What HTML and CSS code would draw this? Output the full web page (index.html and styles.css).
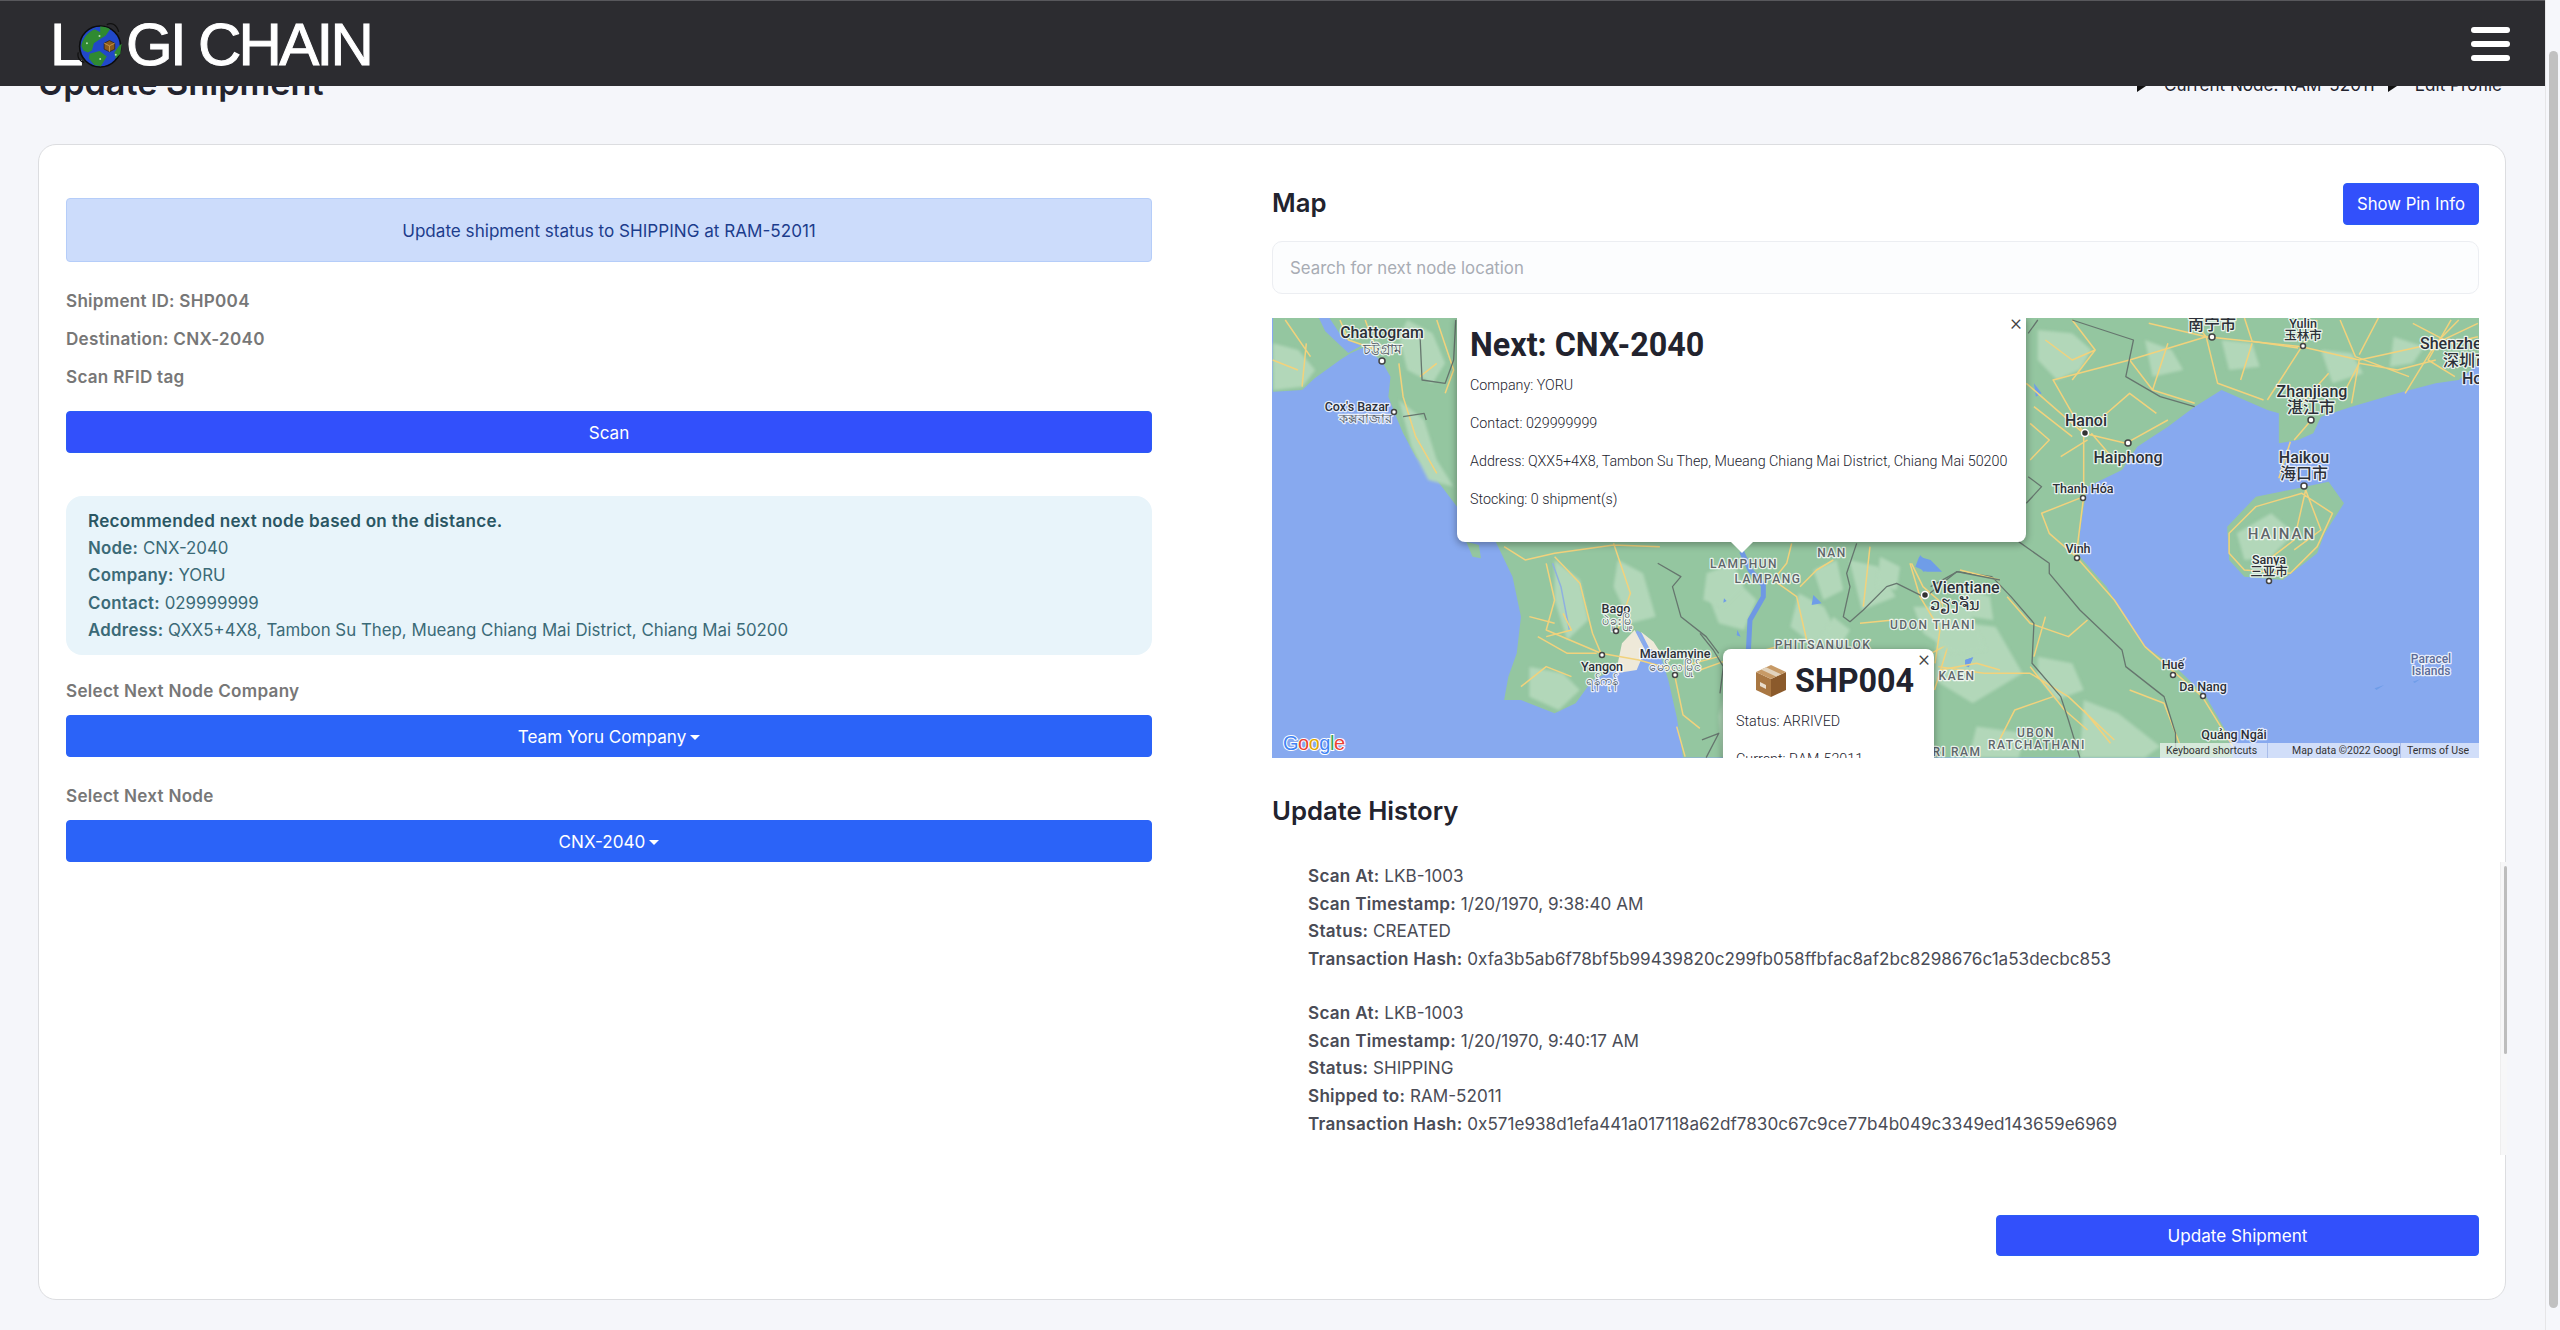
FILE: index.html
```html
<!DOCTYPE html>
<html lang="en">
<head>
<meta charset="utf-8">
<title>Update Shipment</title>
<link rel="stylesheet" href="styles.css">
</head>
<body>
<div class="app">
  <div class="page">
    <header class="topbar">
      <div class="logo">
        <span class="logo-l">L</span>
        <svg class="globe" viewBox="80 10 145 145" aria-hidden="true">
          <path class="orbit" d="M170 24c15-8 30 0 36 22M84 108c-4 15 4 26 18 30"/>
          <circle class="ocean" cx="150" cy="90" r="62"/>
          <path class="cont" d="M93 88c4-22 20-42 40-50l16 8 16 12-16 10-18 12-6 22-12 6-14-6z"/>
          <path class="cont" d="M150 30c12 0 22 3 30 8l-14 20-16-8z"/>
          <path class="cont" d="M118 112l30-8 22 16-18 30-20-4-16-20zM207 88l8-6-4 30-14 14-4-18z"/>
          <circle class="spark" cx="148" cy="58" r="3"/><circle class="spark" cx="110" cy="80" r="3"/><circle class="spark" cx="150" cy="128" r="3"/><circle class="spark" cx="197" cy="115" r="3"/>
          <path class="parcel" d="M162 80l16-8 16 8v18l-16 8-16-8z"/>
          <path class="parcel-line" d="M162 80l16 8 16-8M178 88v18"/>
        </svg>
        <span class="logo-rest">GI CHAIN</span>
      </div>
      <div class="burger"><span></span><span></span><span></span></div>
    </header>

    <main class="content">
      <div class="title-row">
        <h1 class="page-title">Update Shipment</h1>
        <nav class="crumbs">
          <svg class="crumb-arrow" viewBox="0 0 14 18"><path d="M1 1l12 8-12 8z"/></svg>
          <span>Current Node: RAM-52011</span>
          <svg class="crumb-arrow" viewBox="0 0 14 18"><path d="M1 1l12 8-12 8z"/></svg>
          <span>Edit Profile</span>
        </nav>
      </div>

      <section class="card">
        <div class="col-left">
          <div class="alert">Update shipment status to SHIPPING at RAM-52011</div>
          <p class="label first">Shipment ID: SHP004</p>
          <p class="label">Destination: CNX-2040</p>
          <p class="label">Scan RFID tag</p>
          <button class="btn btn-indigo btn-full scan">Scan</button>
          <div class="reco">
            <div class="reco-title">Recommended next node based on the distance.</div>
            <div><b>Node:</b> CNX-2040</div>
            <div><b>Company:</b> YORU</div>
            <div><b>Contact:</b> 029999999</div>
            <div><b>Address:</b> QXX5+4X8, Tambon Su Thep, Mueang Chiang Mai District, Chiang Mai 50200</div>
          </div>
          <p class="label select-label">Select Next Node Company</p>
          <button class="btn btn-blue btn-full caret">Team Yoru Company</button>
          <p class="label select-label second">Select Next Node</p>
          <button class="btn btn-blue btn-full caret">CNX-2040</button>
        </div>

        <div class="col-right">
          <div class="map-head">
            <h2 class="section-title map-title">Map</h2>
            <button class="btn btn-indigo pin-btn">Show Pin Info</button>
          </div>
          <input class="search" type="text" placeholder="Search for next node location">

          <div class="map">
            <svg class="map-svg" viewBox="1272 318 1207 440" width="1207" height="440">
              <rect class="water" x="1272" y="318" width="1207" height="440"/>
              <g transform="translate(1260 300) scale(.4209 .3333)">
                <path class="land" d="M31 54L1568 54 1568 1373 1005 1373 990 1250 970 1140 950 1060 920 1010 895 990 880 1060 860 1100 790 1140 750 1210 700 1240 620 1200 580 1200 590 1130 610 1060 620 950 600 830 560 725 480 640 420 540 370 470 340 400 320 340 305 290 310 230 290 185 250 140 215 160 190 180 130 235 100 270 31 275z"/>
                <path class="land" d="M490 725l30 10 5 40-20-5z"/>
                <path class="water" d="M140 54l15 40 55 65 30-22-45-25-30-58z"/>
                <path class="light" d="M31 130l60 20 40 60-30 50-69 10zM350 60l60 40 30 90-30 60-60-40-20-100zM330 300l60 60 30 120 40 80-60-20-40-100zM700 780l60 60 20 120-50 60-30-120zM850 780l60 40 30 130-60 20-40-110zM640 1100l80 20 40 50-50 60-70-40zM1060 870l70-30 50 60-30 90-60-20zM1280 880l60 40 40 100-60 20-60-60zM1400 780l70 20 40 90-80 40zM1120 1100l30 40 10 230-60 0-10-120z"/>
                <path class="sand" d="M860 1030l30-40 25 60-20 60-50 10zM905 995l30 30 20 40-30-20z"/>
                <path class="river2" d="M695 790l20 70 20 130M900 1000l10 30"/>
                <g class="road">
                  <path d="M60 60l60 110M110 130l-10 130M330 190l10 100 30 120 50 110M30 180l60 30M190 60l20 60 70 30M250 60l20 70M420 190l-40 40"/>
                  <path d="M420 60l40 150-20 70"/>
                  <path d="M580 740l50 40 70-20 140-25 110 5M680 790l20 110-20 90 130 70M700 770l60 80 30 150 20 60M840 730l40 150-30 110M810 1060l90 20 85 30M985 1125l20 120 40 40"/>
                  <path d="M660 1010l70 50 70 0M640 950l60 20M990 1280l20 90M720 940l20 50-60 20M1090 1070l-90 30M620 1160l60-60 60 30"/>
                </g>
                <g class="border">
                  <path d="M380 100l5 140 55 10 20-70 5-120M340 350l50-10 5 20M945 790l55 40-20 30 20 90 60 60 30 50M1050 1320l40-20-30 73"/>
                </g>
              </g>
              <g transform="translate(1900 300) scale(.3827 .3333)">
                <path class="land" d="M870 1373L850 1290 800 1190 720 1100 640 1040 570 920 540 860 470 770 470 700 480 620 490 560 580 510 620 440 700 380 770 320 840 270 900 300 960 330 990 340 990 430 1040 420 1080 400 1100 350 1180 320 1300 280 1400 250 1460 240 1513 190 1513 54 0 54 0 1373z"/>
                <path class="land" d="M855 680L930 590 1040 565 1120 545 1160 610 1110 700 1090 760 1000 840 900 830 860 780z"/>
                <path class="light" d="M360 90l90 10 50 50-30 60-60 30-50-60zM640 120l70 30 30 60-80 20zM840 120l80 10 20 70-80 10zM1100 150l80 10 30 60-80 30zM1290 110l80 30-30 50-60 10zM360 1070l90 20 30 80-70 30-50-70zM100 960l150 20 70 140-130 90-100-70zM480 1200l90 40 110 100-40 33-170 0zM880 700l90-60 60 60-60 70-70 10zM200 1280l130 20-20 73-130 0z"/>
                <path class="lake" d="M50 770l30 10 30 35-40 0-30-15zM170 1080l20-8-10 30-10-5zM350 250l20 30-15 10zM1240 1165l25-10-20 15zM1340 1145l20-8-15 12z"/>
                <g class="road">
                  <path d="M600 180l200-70 250 30 150 40 200-50 110-60M800 110l30 140 120 50M1050 140l-90 160M1200 180l-20 130M1400 130l-80 150M1050 140l40-80M1400 130l60-70"/>
                  <path d="M650 70l150 40-40-56M900 54l20 70 120 20M1150 60l40 110 140 60M1250 54l-50 110M1340 70l100 60 70-20M1440 60l-60 120 70 50M1400 180l-100 30-100-20-50 110M920 130l-30 110M700 130l-40 140 110 40M600 180l60 90M450 60l60 90-60 90M380 120l70 60 60-30M1120 220l-70 90"/>
                  <path d="M330 250l150 150 110 30 110-70M480 400l0 190-20 180 100 130 80 140 150 150 80 150M480 400l-80-160 200-60M480 400l-120-120M350 320l100 90M480 590l-110 50 20 60 70 70M520 360l80-80 70 60M420 470l70-50M560 480l-60-80M340 370l50 50-50 60"/>
                  <path d="M1075 360l-45 60M1020 425l-30 110"/>
                  <path d="M860 700l70-80 120-40 80 60-40 100-70 80-120-10-40-50zM1060 570l-30 150-80 70M1060 570l40 120-70 60"/>
                  <path d="M30 790l30 70 50 50 20 110-40 150M130 1030l-80 50M100 1100l120 20 120 0 100 70 120 130M340 1100l90 130 60 60M480 1230l70 100"/>
                  <path d="M600 1170l90 40 40 120M400 1190l-100 40-40 90M280 890l60 80 100 40 50-50M380 950l-30 120"/>
                </g>
                <g class="border">
                  <path d="M450 60l160 60-20 110 90 60 90 30M335 100l25-40M335 530l35 30-40 50M310 725l80 65 0 30 80 110 110 120 10 50 100 90 30 110 0 63"/>
                  <path d="M80 860l70-45 90 15 50 60 60 80-5 120 75 100 20 70 30 113"/>
                </g>
              </g>
              <g transform="translate(1700 530) scale(.3333)">
                <path class="light" d="M20 130l80-30 30 70-60 60-60-20zM340 120l70-30 20 90-60 30zM540 80l60 30-10 70-60-10zM640 230l160 0 60 130-100 10-90-60zM780 170l90 30 10 70-70-10zM400 260l50 40-30 50-60-20z"/>
                <path class="lake" d="M660 75l30 30 25 10-45 10-15-20zM340 195l25 25-30 5zM795 390l25-8-10 22zM72 205l8 8-10 5zM112 300l10 20-12-4z"/>
                <path class="river" d="M125 65l25 55 40 45 0 35-40 70-5 95"/>
                <g class="road">
                  <path d="M275 40l-15 60-40 50 70 50 30 130M400 90l-50 30-50 50M510 50l-20 180M630 100l30 100 60 100-15 100M720 420l110-20 70 20M0 420l70-25 160-45M480 280l100-10M780 120l120 30"/>
                </g>
                <g class="border">
                  <path d="M470 40l-30 90 10 40-20 90 20 15 40-35 70-70 30-10 80 40M690 190l80-65 130 25M0 310l40 50 30 50-10 80"/>
                </g>
              </g>

              <g class="city">
                <text x="1382" y="332" class="wide">Chattogram</text>
                <text x="1357" y="406" class="sm">Cox's Bazar</text>
                <text x="1382" y="348" class="bn">চট্টগ্রাম</text>
                <text x="1365" y="418" class="bn sm">কক্সবাজার</text>
                <text x="1616" y="608" class="sm">Bago</text>
                <text x="1618" y="620" class="bn sm">ပဲခူးမြို့</text>
                <text x="1602" y="666" class="sm">Yangon</text>
                <text x="1602" y="680" class="bn sm">ရန်ကုန်</text>
                <text x="1675" y="653" class="sm">Mawlamyine</text>
                <text x="1675" y="666" class="bn sm">မော်လမြိုင်</text>
                <text x="1966" y="587" class="lg">Vientiane</text>
                <text x="1955" y="604" class="lg">ວຽງຈັນ</text>
                <text x="2086" y="420" class="lg">Hanoi</text>
                <text x="2128" y="457" class="lg">Haiphong</text>
                <text x="2083" y="488" class="sm">Thanh Hóa</text>
                <text x="2078" y="548" class="sm">Vinh</text>
                <text x="2212" y="324" class="lg">南宁市</text>
                <text x="2303" y="323" class="sm">Yulin</text>
                <text x="2303" y="335" class="sm">玉林市</text>
                <text x="2312" y="391" class="lg">Zhanjiang</text>
                <text x="2311" y="407" class="lg">湛江市</text>
                <text x="2304" y="457" class="lg">Haikou</text>
                <text x="2304" y="473" class="lg">海口市</text>
                <text x="2269" y="559" class="sm">Sanya</text>
                <text x="2269" y="571" class="sm">三亚市</text>
                <text x="2173" y="664" class="sm">Huế</text>
                <text x="2203" y="686" class="sm">Da Nang</text>
                <text x="2234" y="734" class="sm">Quảng Ngãi</text>
                <text x="2420" y="343" class="lg start">Shenzhen</text>
                <text x="2443" y="360" class="lg start">深圳市</text>
                <text x="2462" y="378" class="lg start">Hong Kong</text>
              </g>
              <g class="region">
                <text x="1744" y="564">LAMPHUN</text>
                <text x="1768" y="579">LAMPANG</text>
                <text x="1832" y="553">NAN</text>
                <text x="1823" y="645">PHITSANULOK</text>
                <text x="1933" y="625">UDON THANI</text>
                <text x="1957" y="676">KAEN</text>
                <text x="1957" y="752">RI RAM</text>
                <text x="2036" y="733">UBON</text>
                <text x="2037" y="745">RATCHATHANI</text>
                <text x="2282" y="534" class="big">HAINAN</text>
              </g>
              <g class="islands">
                <text x="2431" y="659">Paracel</text>
                <text x="2431" y="671">Islands</text>
              </g>
              <g class="dots">
                <circle cx="1382" cy="361" r="3"/><circle cx="1394" cy="412" r="2.5"/><circle cx="1616" cy="631" r="2.5"/><circle cx="1602" cy="655" r="2.5"/><circle cx="1675" cy="675" r="2.5"/>
                <circle cx="2128" cy="443" r="3"/><circle cx="2083" cy="498" r="2.5"/><circle cx="2077" cy="558" r="2.5"/><circle cx="2212" cy="337" r="3"/><circle cx="2303" cy="346" r="2.5"/><circle cx="2311" cy="420" r="3"/><circle cx="2304" cy="486" r="3"/><circle cx="2269" cy="581" r="2.5"/><circle cx="2173" cy="675" r="2.5"/><circle cx="2203" cy="696" r="2.5"/>
              </g>
              <g class="capitals">
                <circle cx="2085" cy="433" r="3.5"/><circle cx="1925" cy="595" r="3.5"/>
              </g>
              <g class="google">
                <text x="1283" y="750"><tspan class="gb">G</tspan><tspan class="gr">o</tspan><tspan class="gy">o</tspan><tspan class="gb">g</tspan><tspan class="gg">l</tspan><tspan class="gr">e</tspan></text>
              </g>
            </svg>

            <div class="map-terms">
              <span class="terms-a">Keyboard shortcuts</span>
              <span class="terms-b">Map data ©2022 Google</span>
              <span class="terms-c">Terms of Use</span>
            </div>

            <div class="popup popup-next">
              <button class="popup-x">×</button>
              <h3 class="popup-title">Next: CNX-2040</h3>
              <p>Company: YORU</p>
              <p>Contact: 029999999</p>
              <p>Address: QXX5+4X8, Tambon Su Thep, Mueang Chiang Mai District, Chiang Mai 50200</p>
              <p>Stocking: 0 shipment(s)</p>
            </div>
            <div class="popup-tail"></div>
            <div class="popup popup-ship">
              <button class="popup-x">×</button>
              <h3 class="popup-title ship-title">
                <svg class="box-icon" viewBox="0 0 32 34" aria-hidden="true">
                  <path class="box-left" d="M1 8l15 7v18L1 26z"/>
                  <path class="box-right" d="M16 15l15-7v18l-15 7z"/>
                  <path class="box-top" d="M1 8l15-7 15 7-15 7z"/>
                  <path class="box-tape" d="M6 5.600l15 7 5-2.400-15-7z"/>
                  <path class="box-label" d="M5 18l6 3v4l-6-3z"/>
                </svg>
                SHP004
              </h3>
              <p>Status: ARRIVED</p>
              <p>Current: RAM-52011</p>
            </div>
          </div>

          <h2 class="section-title history-title">Update History</h2>
          <div class="history">
            <div class="entry">
              <div><b>Scan At:</b> LKB-1003</div>
              <div><b>Scan Timestamp:</b> 1/20/1970, 9:38:40 AM</div>
              <div><b>Status:</b> CREATED</div>
              <div><b>Transaction Hash:</b> 0xfa3b5ab6f78bf5b99439820c299fb058ffbfac8af2bc8298676c1a53decbc853</div>
            </div>
            <div class="entry">
              <div><b>Scan At:</b> LKB-1003</div>
              <div><b>Scan Timestamp:</b> 1/20/1970, 9:40:17 AM</div>
              <div><b>Status:</b> SHIPPING</div>
              <div><b>Shipped to:</b> RAM-52011</div>
              <div><b>Transaction Hash:</b> 0x571e938d1efa441a017118a62df7830c67c9ce77b4b049c3349ed143659e6969</div>
            </div>
            <div class="history-track"><div class="history-thumb"></div></div>
          </div>
          <div class="actions">
            <button class="btn btn-indigo update-btn">Update Shipment</button>
          </div>
        </div>
      </section>
    </main>
  </div>
  <div class="scrollbar"><div class="scrollbar-thumb"></div></div>
</div>
</body>
</html>
```

FILE: styles.css
```css
* { box-sizing: border-box; }
html, body { margin: 0; height: 100%; overflow: hidden; }
body { font-family: Inter, "Noto Sans", sans-serif; font-size: 17.100px; color: #22232e; background: #f5f6fa; }
.app { display: flex; height: 1330px; }
.page { flex: 1; position: relative; overflow: hidden; min-width: 0; }

.topbar { position: absolute; top: 0; left: 0; right: 0; z-index: 10; height: 86px; background: #2c2c30; border-top: 1px solid #58585c; display: flex; align-items: center; justify-content: space-between; padding: 0 35px 0 50px; }
.logo { display: flex; align-items: center; color: #fff; font-family: "Liberation Sans", Arial, sans-serif; font-size: 60px; line-height: 1; letter-spacing: -2.700px; -webkit-text-stroke: 1px #fff; margin-top: 2px; }
.logo-l { width: 27px; }
.globe { width: 48px; height: 48px; margin-top: -1px; }
.orbit { fill: none; stroke: #111; stroke-width: 4; }
.ocean { fill: #2148c9; stroke: #0c0c0c; stroke-width: 5; }
.cont { fill: #2f8a31; }
.spark { fill: #b6e0b0; }
.parcel { fill: #8a5a1c; stroke: #2a1c08; stroke-width: 2; }
.parcel-line { fill: none; stroke: #e0b060; stroke-width: 2; }
.logo-rest { white-space: pre; margin-left: 1px; }
.burger { display: flex; flex-direction: column; gap: 8px; width: 39px; }
.burger span { height: 6px; border-radius: 3px; background: #fff; }

.content { padding: 63px 39px 0 38px; }
.title-row { display: flex; justify-content: space-between; height: 40px; margin-bottom: 41px; }
.page-title { margin: 0; font-size: 34.200px; line-height: 40px; font-weight: 600; color: #22232e; }
.crumbs { display: flex; align-items: center; height: 24px; margin-top: 9px; margin-right: 4px; color: #22232e; }
.crumb-arrow { width: 14px; height: 18px; margin: 0 14px 0 0; fill: #111; }
.crumbs span + .crumb-arrow { margin-left: 12px; }

.card { display: grid; grid-template-columns: 1086px 1207px; column-gap: 120px; height: 1156px; background: #fff; border: 1px solid #dcdde0; border-radius: 18px; padding: 38px 27px 0; }
.col-left { padding-top: 15px; }
.alert { height: 64px; display: flex; align-items: center; justify-content: center; background: #ccdcfb; border: 1px solid #b5cdf9; border-radius: 4px; color: #1c3c8c; }
.label { margin: 11px 0 0; line-height: 27px; font-weight: 600; letter-spacing: .27px; color: #777; }
.label.first { margin-top: 25px; }
.btn { font: inherit; color: #fff; border: 1px solid; border-radius: 4px; cursor: pointer; }
.btn-indigo { background: #3250fb; border-color: #2a5cf5; }
.btn-blue { background: #2b63f8; border-color: #2b63f8; }
.btn-full { display: block; width: 100%; height: 42px; }
.scan { margin-top: 21px; }
.caret::after { content: ""; display: inline-block; margin-left: 4px; vertical-align: 3px; border-top: 5px solid #fff; border-left: 5px solid transparent; border-right: 5px solid transparent; }
.reco { margin-top: 43px; height: 159px; padding: 11px 22px; background: #e8f4fa; border-radius: 16px; color: #3b6a77; font-size: 16.850px; line-height: 27.500px; }
.reco b { font-weight: 600; letter-spacing: .27px; }
.reco-title { font-weight: 600; font-size: 17.100px; letter-spacing: .27px; color: #2a5663; }
.select-label { margin-top: 22px; }
.select-label.second { margin-top: 25px; }
.select-label + .btn { margin-top: 11px; }

.map-head { display: flex; justify-content: space-between; align-items: center; height: 42px; }
.section-title { margin: 0; font-size: 25.700px; line-height: 32px; font-weight: 600; color: #22232e; }
.map-title { margin-bottom: 2px; }
.pin-btn { height: 42px; width: 136px; padding: 0; font-size: 16.700px; }
.search { display: block; width: 100%; height: 53px; margin-top: 16px; padding: 0 17px; font: inherit; font-size: 16.800px; background: #fcfdfe; border: 1px solid #eceef2; border-radius: 10px; color: #22232e; }
.search::placeholder { color: #a8acb4; opacity: 1; }

.map { position: relative; height: 440px; margin-top: 24px; overflow: hidden; font-family: Roboto, sans-serif; }
.map-svg { display: block; font-family: Roboto, "Noto Sans CJK SC", sans-serif; }
.water { fill: #87a9ef; }
.land { fill: #94c6a0; }
.light { fill: #b2d7b9; filter: blur(4px); }
.sand { fill: #eee9d9; filter: blur(1px); }
.lake { fill: #6f9de8; }
.road path, .border path, .river, .river2 { fill: none; vector-effect: non-scaling-stroke; stroke-linejoin: round; }
.road path { stroke: #f2d27c; stroke-width: 1.500; }
.border path { stroke: #66766e; stroke-width: 1.300; }
.river { stroke: #6f98e4; stroke-width: 5; }
.river2 { stroke: #8fb0e0; stroke-width: 1.500; }
.city text, .region text, .islands text { text-anchor: middle; dominant-baseline: central; paint-order: stroke; stroke: rgba(255,255,255,.8); stroke-width: 2.500px; stroke-linejoin: round; }
.city text { font-size: 14px; font-weight: 500; fill: #2c3038; }
.city text.wide { font-size: 15.800px; }
.city text.lg { font-size: 16px; }
.city text.sm { font-size: 12.500px; }
.city text.bn { font-family: "Noto Sans", "DejaVu Sans", sans-serif; font-weight: 400; fill: #4d5560; }
.city text.start { text-anchor: start; }
.region text { font-size: 12px; font-weight: 500; letter-spacing: 1.500px; fill: #5f666a; }
.region text.big { font-size: 15px; letter-spacing: 2px; }
.islands text { font-size: 12px; font-weight: 500; fill: #5c6c98; }
.dots circle { fill: #fff; stroke: #444; stroke-width: 1.500; }
.capitals circle { fill: #333; stroke: #fff; stroke-width: 1.500; }
.google text { font-family: "Liberation Sans", sans-serif; font-size: 20px; font-weight: 400; paint-order: stroke; stroke: #fff; stroke-width: 2px; letter-spacing: -.5px; }
.gb { fill: #4285f4; } .gr { fill: #ea4335; } .gy { fill: #e0a800; } .gg { fill: #34a853; }

.map-terms { position: absolute; right: 0; bottom: 0; left: 888px; height: 15px; display: flex; background: rgba(255,255,255,.62); font-size: 10.500px; line-height: 15px; color: #333; white-space: nowrap; }
.map-terms span { overflow: hidden; display: block; }
.terms-a { width: 108px; padding-left: 6px; border-right: 1px solid #a9bdea; }
.terms-b { width: 133px; padding-left: 24px; border-right: 1px solid #a9bdea; }
.terms-c { padding-left: 6px; }

.popup { position: absolute; background: #fff; box-shadow: 0 2px 7px 1px rgba(0,0,0,.3); color: #22232e; }
.popup p { margin: 0 0 18px; font-size: 14.300px; line-height: 20px; font-weight: 300; }
.popup-x { position: absolute; padding: 0; width: 20px; height: 20px; border: 0; background: none; font: 300 22px/20px Roboto, sans-serif; color: #444; }
.popup-title { margin: 0 0 11px; font-size: 32.300px; line-height: 38px; font-weight: 700; }
.popup-next { left: 185px; top: 0; width: 569px; height: 224px; padding: 8px 13px 0; border-radius: 0 0 8px 8px; }
.popup-next .popup-x { right: 0; top: -5px; }
.popup-tail { position: absolute; left: 458px; top: 223px; border-top: 12px solid #fff; border-left: 12px solid transparent; border-right: 12px solid transparent; }
.popup-ship { left: 451px; top: 331px; width: 211px; height: 160px; padding: 13px 13px 0; border-radius: 8px 8px 0 0; }
.popup-ship .popup-x { right: 0; top: 0; }
.ship-title { display: flex; align-items: center; gap: 8px; margin: 0 0 11px 19px; white-space: nowrap; }
.box-icon { width: 32px; height: 34px; }
.box-left { fill: #a97742; } .box-right { fill: #8b5a2b; } .box-top { fill: #c79a66; } .box-tape { fill: #e2d3bd; } .box-label { fill: #e8dccb; }

.history-title { margin-top: 37px; }
.history { position: relative; height: 293px; margin-top: 35px; margin-right: -28px; padding-left: 36px; overflow: hidden; color: #4a4c56; line-height: 27.700px; }
.history b { font-weight: 600; letter-spacing: .27px; }
.entry { margin-bottom: 26px; }
.history-track { position: absolute; top: 0; right: 0; bottom: 0; width: 7px; background: #f7f7f8; border-left: 1px solid #eee; }
.history-thumb { width: 3px; height: 188px; margin: 4px 0 0 3px; background: #bdbdbd; border-radius: 2px; }
.actions { display: flex; justify-content: flex-end; margin-top: 60px; }
.update-btn { width: 483px; height: 41px; }

.scrollbar { width: 15px; background: #f6f7fb; border-left: 1px solid #e6e6e8; padding: 51px 2px 0 3px; }
.scrollbar-thumb { height: 1257px; background: #c1c1c1; border-radius: 5px; }
```
